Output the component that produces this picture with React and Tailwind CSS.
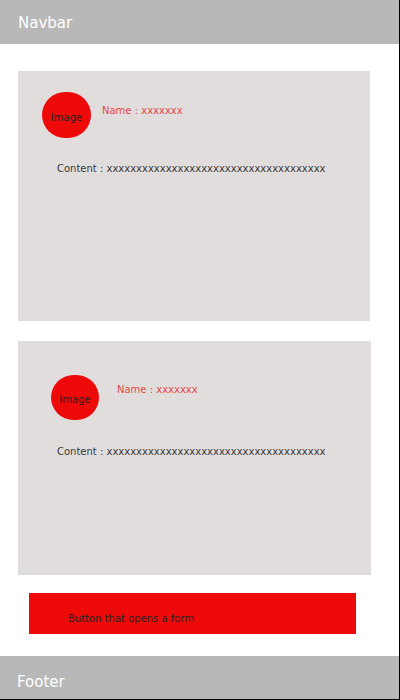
export default function App() {
  const xs = "x".repeat(37);

  return (
    <div
      className="flex h-[700px] w-[400px] flex-col border-r border-b border-black bg-white"
      style={{ fontFamily: '"DejaVu Sans", Verdana, sans-serif' }}
    >
      {/* Navbar */}
      <div className="h-[44px] shrink-0 bg-[#b8b8b8] pl-[18px] pt-[14px] text-[15px] leading-[18px] text-white">
        Navbar
      </div>

      {/* Main */}
      <div className="flex-1 px-[18px]">
        {/* Card 1 */}
        <div className="mt-[27px] h-[250px] w-[352px] bg-[#e2dddd] pt-[21px] pl-[24px]">
          <div className="flex">
            <div className="flex h-[46px] w-[49px] items-center justify-center rounded-full bg-[#ef0a0a] pt-[5px] text-[10px] leading-[12px] text-[#222]">
              Image
            </div>
            <div className="ml-[11px] mt-[13px] text-[10px] leading-[12px] text-[#e54848]">
              Name : xxxxxxx
            </div>
          </div>
          <div className="ml-[15px] mt-[25px] whitespace-nowrap text-[10px] leading-[12px] text-[#3a3a3a]">
            Content : {xs}
          </div>
        </div>

        {/* Card 2 */}
        <div className="mt-[20px] h-[234px] w-[353px] bg-[#e2dddd] pt-[34px] pl-[33px]">
          <div className="flex">
            <div className="flex h-[45px] w-[48px] items-center justify-center rounded-full bg-[#ef0a0a] pt-[4px] text-[10px] leading-[12px] text-[#222]">
              Image
            </div>
            <div className="ml-[18px] mt-[9px] text-[10px] leading-[12px] text-[#e54848]">
              Name : xxxxxxx
            </div>
          </div>
          <div className="ml-[6px] mt-[26px] whitespace-nowrap text-[10px] leading-[12px] text-[#3a3a3a]">
            Content : {xs}
          </div>
        </div>

        {/* Button */}
        <button className="ml-[11px] mt-[18px] flex h-[41px] w-[327px] items-start bg-[#ef0a0a] pl-[39px] pt-[20px] text-left text-[10px] leading-[12px] text-[#222]">
          Button that opens a form
        </button>
      </div>

      {/* Footer */}
      <div className="h-[43px] shrink-0 bg-[#b8b8b8] pl-[17px] pt-[17px] text-[15px] leading-[18px] text-white">
        Footer
      </div>
    </div>
  );
}
